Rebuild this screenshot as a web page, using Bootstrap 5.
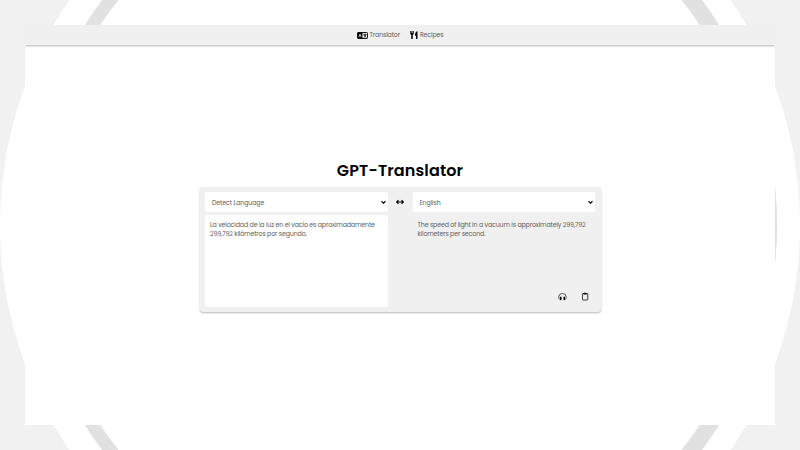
<!DOCTYPE html>
<html lang="en">
<head>
<meta charset="utf-8">
<meta name="viewport" content="width=device-width, initial-scale=1">
<title>GPT-Translator</title>
<link href="https://cdn.jsdelivr.net/npm/bootstrap@5.3.0/dist/css/bootstrap.min.css" rel="stylesheet">
<style>
body{font-family:Poppins,Inter,sans-serif;background:#f1f1f1;color:#606060;font-size:6.3px;letter-spacing:-.15px;height:450px;overflow:hidden}
.backdrop{z-index:-1}
.screen{padding:25px;height:450px}
.page{height:400px;background:#fff}
.topbar{height:20px;background:#f0f0f0;box-shadow:0 1px 2px rgba(0,0,0,.28);gap:10px;clip-path:inset(0 0 -5px 0)}
.topbar a{color:#606060;gap:2px;line-height:20px}
.sliver{z-index:1}
h1{font-size:16px;line-height:20px;font-weight:600;color:#000;margin:116px 0 6px;letter-spacing:.12px}
.panel{width:401px;height:125px;padding:5px 5.5px;background:#f0f0f0;border-radius:3px;box-shadow:0 1px 2px rgba(0,0,0,.28)}
.pane{width:182.5px;gap:2.5px}
.pane .form-select{height:20px;padding:1px 7px 0;font-size:6.2px;letter-spacing:-.06px;line-height:19px;color:#606060;border-radius:2.5px;background-color:#fff;background-size:5px 5px;background-position:right 2px center;
--bs-form-select-bg-img:url("data:image/svg+xml,%3Csvg xmlns='http://www.w3.org/2000/svg' viewBox='0 0 10 10'%3E%3Cpath d='M1 2.500l4 4 4-4' fill='none' stroke='%23000' stroke-width='2.2'/%3E%3C/svg%3E")}
.message{height:92.5px;padding:5px 5px 6px;line-height:9px;border-radius:2.5px;white-space:pre}
.swap{width:25px;height:20px}
.tools{gap:14px;padding:0 1px 0 0}
</style>
<script src="https://cdn.jsdelivr.net/npm/bootstrap@5.3.0/dist/js/bootstrap.bundle.min.js"></script>
</head>
<body>
<svg class="backdrop position-absolute top-0 start-0" width="800" height="450"><circle cx="400" cy="225" r="400" fill="#fff"/><circle cx="402" cy="225" r="375" fill="#e1e1e1"/><circle cx="400" cy="225" r="360.3" fill="#fff"/></svg>
<div class="screen">
<div class="page d-flex flex-column align-items-center">
<nav class="topbar w-100 d-flex justify-content-center align-items-center flex-shrink-0">
<a href="#" class="d-flex align-items-center text-decoration-none"><svg width="11" height="7" viewBox="0 0 22 14"><rect x=".8" y="1.2" width="20.4" height="11.6" rx="1.5" fill="#fff" stroke="#000" stroke-width="2"/><path d="M1 1h10v12H1z"/><path d="M3.500 10L6 4l2.500 6M4.500 8h3" fill="none" stroke="#fff" stroke-width="1.3"/><path d="M13 5h6M16 3.300V5m2 0q-1 4-4.500 5.500M14 6q1.500 3.500 5 4.500" fill="none" stroke="#000" stroke-width="1.5"/></svg><span>Translator</span></a>
<a href="#" class="d-flex align-items-center text-decoration-none"><svg width="8" height="8" viewBox="0 0 16 16"><path d="M.5 0v5q0 2 2 2.500V16H5.500V7.500Q7.500 7 7.500 5V0H6v4H5V0H3.200v4H2.300V0zM15 0Q9.500 2 10 9.500h2V16h3z"/></svg><span>Recipes</span></a>
</nav>
<h1>GPT-Translator</h1>
<main class="panel d-flex">
<section class="pane d-flex flex-column">
<select class="form-select border-0" aria-label="Source language"><option>Detect Language</option></select>
<div class="message bg-white">La velocidad de la luz en el vacío es aproximadamente
299,792 kilómetros por segundo.</div>
</section>
<div class="swap d-flex align-items-center justify-content-center"><svg width="8" height="6" viewBox="0 0 16 12"><path d="M1 6h14M5 2.500L1 6l4 3.500m6-7l4 3.500-4 3.500" fill="none" stroke="#000" stroke-width="2.200"/></svg></div>
<section class="pane d-flex flex-column">
<select class="form-select border-0" aria-label="Target language"><option>English</option></select>
<div class="message d-flex flex-column justify-content-between"><span>The speed of light in a vacuum is approximately 299,792
kilometers per second.</span>
<div class="tools d-flex justify-content-end align-items-center">
<svg width="9" height="9" viewBox="0 0 18 18"><path d="M5 15.500H4Q1.500 13.500 1.500 10a7.500 7 0 0 1 15 0q0 3.500-2.500 5.500h-1" fill="none" stroke="#222" stroke-width="1.500"/><path d="M4 9.500h3V16H4zM11 9.500h3V16h-3z"/></svg>
<svg width="8" height="9" viewBox="0 0 16 18"><rect x="3" y="3" width="10.500" height="13" rx="1" fill="none" stroke="#111" stroke-width="1.600"/><path d="M5 2h1.500Q8.200 0 10 2h1.500v3H5z"/></svg>
</div></div>
</section>
</main>
</div>
</div>
<svg class="sliver position-absolute top-0 start-0 pe-none" width="800" height="450"><defs><clipPath id="edge"><path d="M775 180h3v90h-3z"/></clipPath></defs><g clip-path="url(#edge)"><circle cx="402" cy="225" r="375" fill="#e1e1e1"/></g></svg>
</body>
</html>
